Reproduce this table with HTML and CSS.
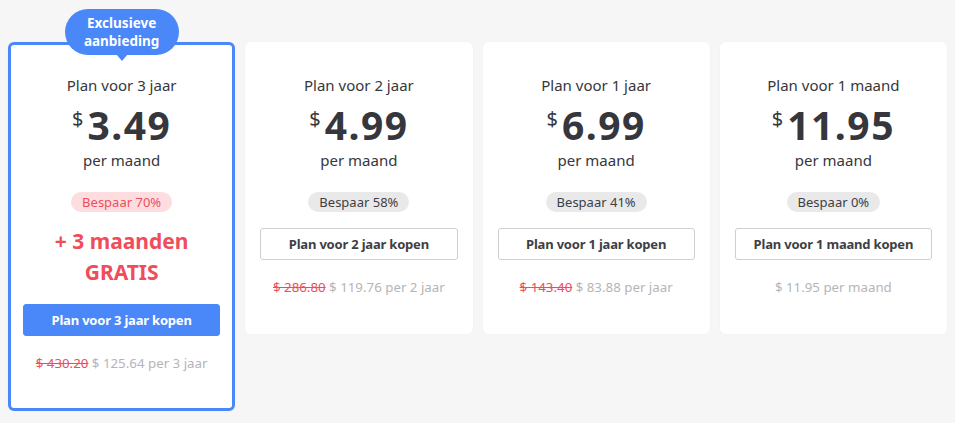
FILE: index.html
```html
<!DOCTYPE html>
<html lang="nl">
<head>
<meta charset="utf-8">
<link rel="stylesheet" href="styles.css">
</head>
<body>
<div class="plans">
  <div class="card featured">
    <div class="badge">Exclusieve<br>aanbieding</div>
    <div class="title">Plan voor 3 jaar</div>
    <div class="price"><span class="cur">$</span><span class="amount">3.49</span></div>
    <div class="per">per maand</div>
    <div class="save save-red">Bespaar 70%</div>
    <div class="promo">+ 3 maanden<br>GRATIS</div>
    <button class="btn btn-primary">Plan voor 3 jaar kopen</button>
    <div class="total"><s class="old">$ 430.20</s> $ 125.64 per 3 jaar</div>
  </div>
  <div class="card">
    <div class="title">Plan voor 2 jaar</div>
    <div class="price"><span class="cur">$</span><span class="amount">4.99</span></div>
    <div class="per">per maand</div>
    <div class="save">Bespaar 58%</div>
    <button class="btn">Plan voor 2 jaar kopen</button>
    <div class="total"><s class="old">$ 286.80</s> $ 119.76 per 2 jaar</div>
  </div>
  <div class="card">
    <div class="title">Plan voor 1 jaar</div>
    <div class="price"><span class="cur">$</span><span class="amount">6.99</span></div>
    <div class="per">per maand</div>
    <div class="save">Bespaar 41%</div>
    <button class="btn">Plan voor 1 jaar kopen</button>
    <div class="total"><s class="old">$ 143.40</s> $ 83.88 per jaar</div>
  </div>
  <div class="card">
    <div class="title">Plan voor 1 maand</div>
    <div class="price"><span class="cur">$</span><span class="amount">11.95</span></div>
    <div class="per">per maand</div>
    <div class="save">Bespaar 0%</div>
    <button class="btn">Plan voor 1 maand kopen</button>
    <div class="total">$ 11.95 per maand</div>
  </div>
</div>
</body>
</html>
```

FILE: styles.css
```css
* { box-sizing: border-box; }
html, body { margin: 0; padding: 0; }
body {
  background: #f6f6f6;
  font-family: "Noto Sans", "Liberation Sans", sans-serif;
  color: #35373d;
  width: 955px;
  height: 423px;
  overflow: hidden;
}
.plans {
  display: grid;
  grid-template-columns: repeat(4, 1fr);
  gap: 10px;
  padding: 42px 8px 0 8px;
  align-items: start;
}
.card {
  position: relative;
  background: #fff;
  border: 3px solid transparent;
  border-radius: 6px;
  box-shadow: 0 0 2px rgba(0,0,0,0.04);
  padding: 30px 12px 35px;
  display: flex;
  flex-direction: column;
  align-items: center;
  text-align: center;
}
.card.featured {
  border-color: #4a87f8;
  padding-bottom: 36px;
}
.badge {
  position: absolute;
  top: -36px;
  left: 50%;
  transform: translateX(-50%);
  width: 114px;
  height: 46px;
  border-radius: 23px;
  background: #4a87f8;
  color: #fff;
  font-weight: 700;
  font-size: 13.5px;
  line-height: 18px;
  padding-top: 5px;
}
.badge::after {
  content: "";
  position: absolute;
  left: 50%;
  bottom: -6px;
  margin-left: -6px;
  border-left: 6px solid transparent;
  border-right: 6px solid transparent;
  border-top: 7px solid #4a87f8;
}
.title {
  font-size: 15px;
  line-height: 20px;
}
.price {
  display: flex;
  align-items: flex-start;
  margin-top: 8px;
}
.cur {
  font-size: 20px;
  line-height: 20px;
  margin-top: 6px;
  margin-right: 4px;
}
.amount {
  font-size: 39px;
  font-weight: 700;
  line-height: 44px;
  letter-spacing: 1.5px;
}
.per {
  font-size: 15px;
  line-height: 20px;
  margin-top: 3px;
}
.save {
  margin-top: 22px;
  height: 20px;
  line-height: 20px;
  padding: 0 11px;
  border-radius: 10px;
  background: #e9e9ea;
  color: #3d3f45;
  font-size: 13px;
}
.save-red {
  background: #fddde0;
  color: #f04d5b;
}
.promo {
  margin-top: 14px;
  color: #f04d5b;
  font-weight: 700;
  font-size: 21px;
  line-height: 31px;
}
.btn {
  margin-top: 16px;
  width: 100%;
  height: 32px;
  padding: 0;
  border: 1px solid #cfcfd2;
  border-radius: 3px;
  background: #fff;
  color: #3d3f45;
  font-family: inherit;
  font-weight: 700;
  font-size: 13px;
  letter-spacing: -0.2px;
  cursor: pointer;
}
.btn-primary {
  background: #4a87f8;
  border-color: #4a87f8;
  color: #fff;
}
.total {
  margin-top: 18px;
  font-size: 13.3px;
  line-height: 18px;
  color: #b5b5b8;
}
.old {
  color: #f04d5b;
  text-decoration: line-through;
}
```
